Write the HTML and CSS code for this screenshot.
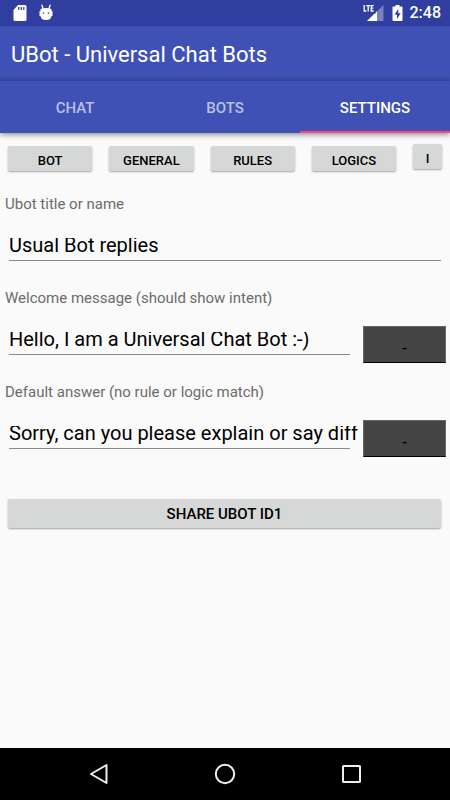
FILE: index.html
```html
<!DOCTYPE html>
<html lang="en">
<head>
<meta charset="utf-8">
<meta name="viewport" content="width=device-width, initial-scale=1">
<title>UBot - Universal Chat Bots</title>
<link rel="stylesheet" href="styles.css">
</head>
<body>
<div class="statusbar">
  <svg class="icon-sd" width="14" height="18" viewBox="0 0 14 18"><path fill="#fff" d="M5 1h7a1.500 1.500 0 0 1 1.500 1.500v13A1.500 1.500 0 0 1 12 17H2a1.500 1.500 0 0 1-1.500-1.500V6z"/><path stroke="#303f9f" stroke-width="1.200" d="M5.800 3v3M8.300 3v3M10.800 3v3"/></svg>
  <svg width="14" height="18" viewBox="0 0 14 18"><path stroke="#fff" stroke-width="1.300" stroke-linecap="round" d="M3 1.200l1 3.500M11 1.200l-1 3.500"/><path fill="#fff" d="M1.500 5Q7 3 12.500 5v2h1v5h-1C12 15 10 16 7 16s-5-1-5.500-4h-1V7h1z"/><circle cx="4.500" cy="9" r=".8" fill="#303f9f"/><circle cx="9.500" cy="9" r=".8" fill="#303f9f"/></svg>
  <span class="spacer"></span>
  <svg width="21" height="18" viewBox="0 0 21 18"><path fill="#7982c1" d="M20.500 1v16H4z"/><path fill="#fff" d="M14 7.300V17H4z"/><path fill="none" stroke="#303f9f" stroke-width="3" d="M1 1v7h10V1z"/><path fill="none" stroke="#fff" stroke-width="1.300" d="M1.200 1v6h2.200M3.300 1.600h3.800M5.200 1.600v6M10.700 1.600H8.200V7h2.500M8.200 4.200h2.200"/></svg>
  <svg class="icon-battery" width="11" height="18" viewBox="0 0 11 18"><path fill="#fff" d="M3.500 1h4v1.500H9.500a1 1 0 0 1 1 1V16a1 1 0 0 1-1 1h-8a1 1 0 0 1-1-1V3.500a1 1 0 0 1 1-1h2z"/><path fill="#303f9f" d="M6.300 5L2.500 10.500h2.500V15l3.700-5.800H6.300z"/></svg>
  <time class="clock">2:48</time>
</div>
<header class="appbar"><h1>UBot - Universal Chat Bots</h1></header>
<nav class="tabs">
  <button class="tab">CHAT</button>
  <button class="tab">BOTS</button>
  <button class="tab tab-active">SETTINGS</button>
</nav>
<main>
  <div class="sections">
    <button class="btn">BOT</button>
    <button class="btn">GENERAL</button>
    <button class="btn">RULES</button>
    <button class="btn">LOGICS</button>
    <button class="btn btn-info">I</button>
  </div>
  <form class="fields">
    <div class="field">
      <label for="title">Ubot title or name</label>
      <div class="row"><div class="line"><input id="title" type="text" value="Usual Bot replies"></div></div>
    </div>
    <div class="field">
      <label for="welcome">Welcome message (should show intent)</label>
      <div class="row"><div class="line"><input id="welcome" type="text" value="Hello, I am a Universal Chat Bot :-)"></div><button type="button" class="dark">-</button></div>
    </div>
    <div class="field">
      <label for="fallback">Default answer (no rule or logic match)</label>
      <div class="row"><div class="line"><input id="fallback" type="text" value="Sorry, can you please explain or say diff"></div><button type="button" class="dark">-</button></div>
    </div>
    <button type="button" class="btn share">SHARE UBOT ID1</button>
  </form>
</main>
<footer class="navbar">
  <button aria-label="Back"><svg width="22" height="22" viewBox="0 0 22 22"><path d="M18.500 2v18L3 11z"/></svg></button>
  <button aria-label="Home"><svg width="22" height="22" viewBox="0 0 22 22"><circle cx="11" cy="11" r="9.200"/></svg></button>
  <button aria-label="Recent apps"><svg width="22" height="22" viewBox="0 0 22 22"><rect x="3" y="3" width="17" height="16" rx=".5"/></svg></button>
</footer>
</body>
</html>
```
FILE: styles.css
```css
* { box-sizing: border-box; }
body {
  margin: 0;
  min-height: 100vh;
  display: flex;
  flex-direction: column;
  background: #fafafa;
  color: #000;
  font-family: Roboto, sans-serif;
}
button { border: 0; padding: 0; background: none; font: inherit; color: inherit; }
.statusbar {
  display: flex;
  align-items: center;
  height: 26px;
  padding: 0 9px 0 13px;
  background: #303f9f;
  color: #fff;
}
.icon-sd { margin-right: 12px; }
.icon-battery { margin: 0 7px 0 8px; }
.spacer { flex: 1; }
.clock { font-size: 16px; font-weight: 500; line-height: 28px; }
.appbar {
  height: 55px;
  padding: 0 11px;
  background: linear-gradient(#3f51b5 48px, #3849a3);
}
.appbar h1 { margin: 0; font-size: 22px; font-weight: 400; line-height: 57px; color: #fff; }
.tabs {
  display: grid;
  grid-template-columns: repeat(3, 1fr);
  height: 52px;
  background: #3f51b5;
  box-shadow: 0 2px 5px rgba(0, 0, 0, .4);
}
.tab { padding-top: 3px; border-bottom: 2px solid transparent; font-size: 15px; font-weight: 500; color: #b9c0e4; }
.tab-active { color: #fff; border-color: #ff4081; }
main { flex: 1; }
.sections {
  display: grid;
  grid-template-columns: repeat(4, 1fr) 29px;
  align-items: end;
  gap: 17px;
  padding: 13px 8px 0;
}
.btn {
  height: 25px;
  padding-top: 3px;
  border-radius: 2px;
  background: #d6d8d7;
  box-shadow: 0 1px 2px rgba(0, 0, 0, .35);
  font-size: 13px;
  font-weight: 500;
}
.btn-info { align-self: start; margin-top: -2px; }
.fields { padding-top: 21px; }
.field { height: 94px; }
.field label { display: block; padding: 0 5px; font-size: 15px; line-height: 24px; color: #6c6c6c; }
.row { display: flex; gap: 13px; padding: 0 4px 0 9px; }
.line { flex: 1; min-width: 0; height: 45px; padding-top: 15px; border-bottom: 1px solid #8a8a8a; }
.row > .line:only-child { margin-right: 5px; }
.line input {
  display: block;
  width: calc(100% + 10px);
  height: 28px;
  padding: 0;
  border: 0;
  outline: 0;
  background: none;
  font: 400 20px/28px Roboto, sans-serif;
  color: #000;
  clip-path: inset(7px 0 0 0);
}
.dark {
  width: 83px;
  height: 37px;
  margin-top: 16px;
  padding-top: 6px;
  background: #444;
  border: 1px solid #666;
  border-bottom-color: #000;
  font-size: 15px;
  font-weight: 500;
}
.share { display: block; width: calc(100% - 17px); height: 29px; margin: 25px 9px 0 8px; padding-top: 1px; font-size: 15px; }
.navbar {
  display: flex;
  justify-content: center;
  height: 52px;
  background: #000;
}
.navbar button { flex: 0 0 28%; display: flex; align-items: center; justify-content: center; }
.navbar svg { fill: none; stroke: #eee; stroke-width: 2; stroke-linejoin: round; }
```
